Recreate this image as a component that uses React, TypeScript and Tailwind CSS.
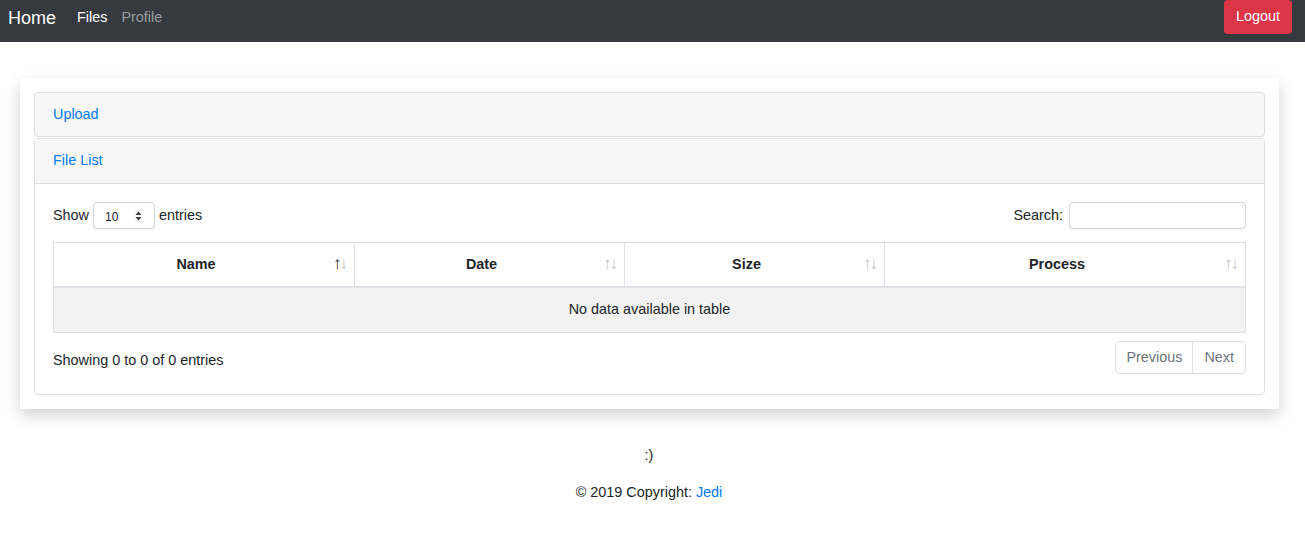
export default function App() {
  const cols = [
    { name: "Name", w: "w-[300px]", sorted: true },
    { name: "Date", w: "w-[270px]", sorted: false },
    { name: "Size", w: "w-[260px]", sorted: false },
    { name: "Process", w: "flex-1", sorted: false },
  ];

  return (
    <div className="min-h-[539px] bg-white text-[#212529] text-[14.4px] font-['Liberation_Sans',Arial,sans-serif]">
      {/* Navbar */}
      <nav className="h-[42px] bg-[#343a40] flex items-start justify-between pl-[8px] pr-[13px]">
        <div className="flex items-center h-[34px] mt-[1px]">
          <span className="text-[18px] text-white mr-[14px]">Home</span>
          <a className="px-[7px] text-white">Files</a>
          <a className="px-[7px] text-[#9a9da0]">Profile</a>
        </div>
        <button className="h-[34px] w-[68px] bg-[#dc3545] text-white rounded-[4px] text-[14.4px]">
          Logout
        </button>
      </nav>

      {/* Main card */}
      <div className="mt-[36px] ml-[20px] w-[1259px] bg-white p-[14px] shadow-[0_6px_14px_rgba(0,0,0,0.18)]">
        <div className="border border-[#dfdfdf] rounded-[4px] bg-[#f7f7f7] h-[45px] px-[18px] flex items-center text-[#007bff]">
          Upload
        </div>
        <div className="mt-[1px] border border-[#dfdfdf] rounded-[4px]">
          <div className="h-[45px] bg-[#f7f7f7] border-b border-[#dfdfdf] px-[18px] flex items-center text-[#007bff]">
            File List
          </div>
          <div className="px-[18px] pt-[18px] pb-[20px]">
            <div className="flex items-center justify-between h-[27px]">
              <div className="flex items-center gap-[4px]">
                <span>Show</span>
                <div className="w-[62px] h-[27px] border border-[#ced4da] rounded-[4px] flex items-center justify-between pl-[11px] pr-[12px] text-[12px]">
                  <span className="mt-[2px]">10</span>
                  <svg width="7" height="10" viewBox="0 0 7 10">
                    <path d="M3.5 0.5 L6.5 4 L0.5 4 Z M0.5 6 L6.5 6 L3.5 9.5 Z" fill="#343a40" />
                  </svg>
                </div>
                <span>entries</span>
              </div>
              <div className="flex items-center gap-[6px]">
                <span>Search:</span>
                <div className="w-[177px] h-[27px] border border-[#ced4da] rounded-[4px] bg-white" />
              </div>
            </div>

            {/* Table */}
            <div className="mt-[13px] border border-[#dee2e6]">
              <div className="flex h-[45px] border-b-2 border-[#dee2e6]">
                {cols.map((c, i) => (
                  <div
                    key={c.name}
                    className={`${c.w} relative flex items-center justify-center font-bold pr-[16px] ${i > 0 ? "border-l border-[#dee2e6]" : ""}`}
                  >
                    {c.name}
                    <span className="absolute right-[8px] top-[12px] text-[17px] leading-none tracking-[-2px] font-normal">
                      <span className={c.sorted ? "opacity-100" : "opacity-30"}>↑</span>
                      <span className="opacity-30">↓</span>
                    </span>
                  </div>
                ))}
              </div>
              <div className="h-[44px] bg-[#f2f2f2] flex items-center justify-center">
                No data available in table
              </div>
            </div>

            <div className="mt-[8px] flex items-center justify-between">
              <span className="mt-[6px]">Showing 0 to 0 of 0 entries</span>
              <div className="flex h-[33px] border border-[#dee2e6] rounded-[4px] text-[#6c757d]">
                <span className="px-[10px] flex items-center border-r border-[#dee2e6]">Previous</span>
                <span className="px-[11px] flex items-center">Next</span>
              </div>
            </div>
          </div>
        </div>
      </div>

      {/* Footer */}
      <div className="mt-[36px] pr-[7px] text-center">
        <div>:)</div>
        <div className="mt-[15px]">
          © 2019 Copyright: <span className="text-[#007bff]">Jedi</span>
        </div>
      </div>
    </div>
  );
}
